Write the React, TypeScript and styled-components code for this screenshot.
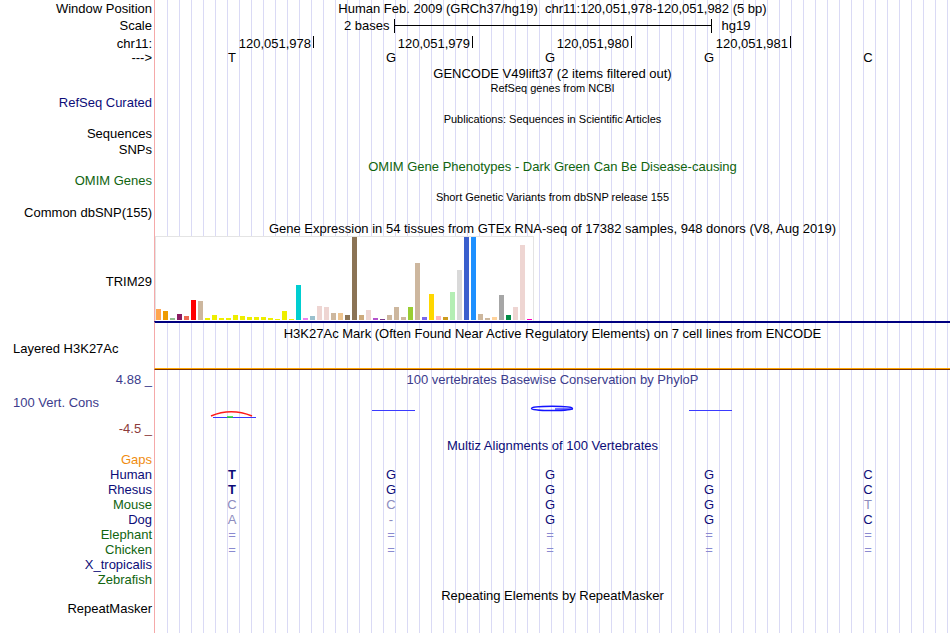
import React from "react";
import styled, { createGlobalStyle } from "styled-components";

const GRID = "#dadaf5";
const RED_LINE = "#f5a9a9";
const NAVY = "#0c0c78";
const GREEN = "#10640f";
const CONS = "#3c3c8c";
const CONS_LOW = "#8c3c3c";
const MISMATCH = "#8c8cbe";
const EQUAL = "#8a8ad0";

const GlobalStyle = createGlobalStyle`
  * { box-sizing: border-box; }
  html, body { margin: 0; padding: 0; background: #fff; }
  body {
    font-family: "Liberation Sans", Arial, Helvetica, sans-serif;
    overflow: hidden;
  }
`;

const Browser = styled.div`
  width: 950px;
  height: 633px;
  display: flex;
  flex-direction: column;
  overflow: hidden;
  background: #fff;
  color: #000;
`;

const Row = styled.div<{ $h?: number; $grow?: boolean }>`
  display: grid;
  grid-template-columns: 154px 1fr;
  height: ${(p) => (p.$h ? `${p.$h}px` : "auto")};
  flex: ${(p) => (p.$grow ? "1 0 auto" : "0 0 auto")};
  font-size: 13px;
  line-height: 15px;
`;

const Label = styled.div<{ $pt?: number; $color?: string; $left?: boolean }>`
  padding-top: ${(p) => p.$pt ?? 0}px;
  padding-right: 2px;
  padding-left: ${(p) => (p.$left ? 13 : 0)}px;
  text-align: ${(p) => (p.$left ? "left" : "right")};
  color: ${(p) => p.$color ?? "#000"};
  white-space: nowrap;
`;

// data side of a row: red divider on the left, lavender guide lines every 12px
const Track = styled.div<{ $pt?: number; $color?: string; $small?: boolean }>`
  min-width: 0;
  border-left: 1px solid ${RED_LINE};
  background:
    linear-gradient(#fff, #fff) 0 0 / 1px 100% no-repeat,
    linear-gradient(to right, ${GRID} 1px, transparent 1px) 0 0 / 12px 100% repeat-x,
    #fff;
  padding-top: ${(p) => p.$pt ?? 0}px;
  color: ${(p) => p.$color ?? "#000"};
  text-align: center;
  white-space: pre;
  font-size: ${(p) => (p.$small ? 11 : 13)}px;
  line-height: ${(p) => (p.$small ? 12 : 15)}px;
`;

// track titles may hang a pixel or two into the next row; keep them above its background
const Caption = styled.span`
  position: relative;
`;

const NavyTrack = styled(Track)`
  border-top: 2px solid #000080;
`;

const RuleTrack = styled(Track)`
  border-top: 1px solid #ffa500;
  border-bottom: 1px solid #7a3000;
`;

const ScaleLine = styled.div`
  display: grid;
  grid-template-columns: 1fr 318px 1fr;
  align-items: center;
`;

const ScaleText = styled.span<{ $side: "left" | "right" }>`
  text-align: ${(p) => (p.$side === "left" ? "right" : "left")};
  padding: ${(p) => (p.$side === "left" ? "0 4px 0 0" : "0 0 0 10px")};
`;

const ScaleBar = styled.div`
  height: 14px;
  border-left: 1px solid #000;
  border-right: 1px solid #000;
  background: linear-gradient(#000, #000) center / 100% 1px no-repeat;
`;

const Columns = styled.div`
  display: grid;
  grid-template-columns: repeat(5, 1fr);
`;

const PosCell = styled.div`
  display: flex;
  justify-content: flex-end;
  align-items: flex-start;
`;

const Tick = styled.span`
  width: 1px;
  height: 12px;
  margin-left: 2px;
  background: #000;
`;

const Base = styled.span<{ $color?: string; $bold?: boolean }>`
  text-align: center;
  padding-right: 5px;
  color: ${(p) => p.$color ?? "#000"};
  font-weight: ${(p) => (p.$bold ? 700 : 400)};
`;

const ChartBox = styled.div`
  width: 379px;
  height: 85px;
  background: #fff;
  border: 1px solid #e4e4e4;
  border-bottom-color: #fff;
  display: flex;
  align-items: flex-end;
  gap: 2px;
`;

const Bar = styled.div<{ $c: string }>`
  flex: none;
  width: 5px;
  background: ${(p) => p.$c};
`;

const LabelStack = styled.div`
  display: flex;
  flex-direction: column;
`;

const StackLine = styled(Label)<{ $mt: number }>`
  margin-top: ${(p) => p.$mt}px;
  height: 15px;
`;

const ConsPlot = styled.svg`
  display: block;
`;

const BRAIN = [2, 5, 2, 2, 5, 4, 3, 3, 3, 2, 1, 9, 1].map((h) => ["#EEEE00", h] as [string, number]);

const GTEX: [string, number][] = [
  ["#FFA54F", 11], ["#EE9A00", 9], ["#8FBC8F", 2], ["#8B1C62", 6], ["#EE6A50", 4],
  ["#FF0000", 20], ["#CDB79E", 19],
  ...BRAIN,
  ["#00CED1", 35], ["#EE82EE", 2], ["#9AC0CD", 4], ["#EED5D2", 14], ["#EED5D2", 13],
  ["#CDB79E", 7], ["#EEC591", 7], ["#8B7355", 5], ["#8B7355", 83], ["#CDAA7D", 5],
  ["#EED5D2", 10], ["#B452CD", 2], ["#7A378B", 1], ["#CDB79E", 5], ["#CDB79E", 13],
  ["#CDB79E", 3], ["#9ACD32", 13], ["#CDB79E", 57], ["#7A67EE", 3], ["#FFD700", 26],
  ["#FFB6C1", 4], ["#CD9B1D", 3], ["#B4EEB4", 28], ["#D9D9D9", 50], ["#3A5FCD", 83],
  ["#1E90FF", 83], ["#CDB79E", 6], ["#CDB79E", 2], ["#FFD39B", 3], ["#A6A6A6", 25],
  ["#008B45", 5], ["#EED5D2", 13], ["#EED5D2", 75], ["#FF00BB", 1],
];

const POSITIONS = ["120,051,978", "120,051,979", "120,051,980", "120,051,981"];
const REF = ["T", "G", "G", "G", "C"];

// kind: b = bold match, m = match, x = mismatch, e = unaligned "="
type Cell = [string, "b" | "m" | "x" | "e"];
const eq: Cell[] = Array.from({ length: 5 }, () => ["=", "e"] as Cell);

const SPECIES: { name: string; color: string; bases: Cell[] }[] = [
  { name: "Human", color: NAVY, bases: [["T", "b"], ["G", "m"], ["G", "m"], ["G", "m"], ["C", "m"]] },
  { name: "Rhesus", color: NAVY, bases: [["T", "b"], ["G", "m"], ["G", "m"], ["G", "m"], ["C", "m"]] },
  { name: "Mouse", color: GREEN, bases: [["C", "x"], ["C", "x"], ["G", "m"], ["G", "m"], ["T", "x"]] },
  { name: "Dog", color: NAVY, bases: [["A", "x"], ["-", "x"], ["G", "m"], ["G", "m"], ["C", "m"]] },
  { name: "Elephant", color: GREEN, bases: eq },
  { name: "Chicken", color: GREEN, bases: eq },
  { name: "X_tropicalis", color: NAVY, bases: [] },
  { name: "Zebrafish", color: GREEN, bases: [] },
];

const baseColor = (k: Cell[1]) => (k === "x" ? MISMATCH : k === "e" ? EQUAL : NAVY);

export default function App() {
  return (
    <>
      <GlobalStyle />
      <Browser>
        <Row $h={17}>
          <Label $pt={1}>Window Position</Label>
          <Track $pt={1}>
            <Caption>{"Human Feb. 2009 (GRCh37/hg19)  chr11:120,051,978-120,051,982 (5 bp)"}</Caption>
          </Track>
        </Row>
        <Row $h={18}>
          <Label $pt={1}>Scale</Label>
          <Track $pt={1}>
            <ScaleLine>
              <ScaleText $side="left">2 bases</ScaleText>
              <ScaleBar />
              <ScaleText $side="right">hg19</ScaleText>
            </ScaleLine>
          </Track>
        </Row>
        <Row $h={15}>
          <Label $pt={1}>chr11:</Label>
          <Track $pt={1}>
            <Columns>
              {POSITIONS.map((p) => (
                <PosCell key={p}>
                  {p}
                  <Tick />
                </PosCell>
              ))}
              <span />
            </Columns>
          </Track>
        </Row>
        <Row $h={15}>
          <Label>---&gt;</Label>
          <Track>
            <Columns>
              {REF.map((b, i) => (
                <Base key={i}>{b}</Base>
              ))}
            </Columns>
          </Track>
        </Row>
        <Row $h={16}>
          <Label />
          <Track $pt={1}>
            <Caption>GENCODE V49lift37 (2 items filtered out)</Caption>
          </Track>
        </Row>
        <Row $h={13}>
          <Label />
          <Track $pt={1} $small>
            <Caption>RefSeq genes from NCBI</Caption>
          </Track>
        </Row>
        <Row $h={18}>
          <Label $pt={1} $color={NAVY}>RefSeq Curated</Label>
          <Track />
        </Row>
        <Row $h={13}>
          <Label />
          <Track $pt={1} $small>
            <Caption>Publications: Sequences in Scientific Articles</Caption>
          </Track>
        </Row>
        <Row $h={16}>
          <Label $pt={1}>Sequences</Label>
          <Track />
        </Row>
        <Row $h={17}>
          <Label $pt={1}>SNPs</Label>
          <Track />
        </Row>
        <Row $h={14}>
          <Label />
          <Track $pt={1} $color={GREEN}>
            <Caption>OMIM Gene Phenotypes - Dark Green Can Be Disease-causing</Caption>
          </Track>
        </Row>
        <Row $h={18}>
          <Label $pt={1} $color={GREEN}>OMIM Genes</Label>
          <Track />
        </Row>
        <Row $h={14}>
          <Label />
          <Track $pt={1} $small>
            <Caption>Short Genetic Variants from dbSNP release 155</Caption>
          </Track>
        </Row>
        <Row $h={16}>
          <Label $pt={1}>Common dbSNP(155)</Label>
          <Track />
        </Row>
        <Row $h={16}>
          <Label />
          <Track $pt={1}>
            <Caption>
              Gene Expression in 54 tissues from GTEx RNA-seq of 17382 samples, 948 donors (V8, Aug 2019)
            </Caption>
          </Track>
        </Row>
        <Row $h={85}>
          <Label $pt={38}>TRIM29</Label>
          <Track>
            <ChartBox>
              {GTEX.map(([c, h], i) => (
                <Bar key={i} $c={c} style={{ height: h }} />
              ))}
            </ChartBox>
          </Track>
        </Row>
        <Row $h={19}>
          <Label />
          <NavyTrack $pt={3}>
            <Caption>H3K27Ac Mark (Often Found Near Active Regulatory Elements) on 7 cell lines from ENCODE</Caption>
          </NavyTrack>
        </Row>
        <Row $h={28}>
          <Label $pt={1} $left>Layered H3K27Ac</Label>
          <Track />
        </Row>
        <Row $h={2}>
          <Label />
          <RuleTrack />
        </Row>
        <Row $h={67}>
          <LabelStack>
            <StackLine $mt={2} $color={CONS}>4.88 _</StackLine>
            <StackLine $mt={8} $color={CONS} $left>100 Vert. Cons</StackLine>
            <StackLine $mt={11} $color={CONS_LOW}>-4.5 _</StackLine>
          </LabelStack>
          <Track $pt={2} $color={CONS}>
            <Caption>100 vertebrates Basewise Conservation by PhyloP</Caption>
            <ConsPlot width={795} height={50} viewBox="0 0 795 50">
              <path d="M56 29 Q76 20.5 97 29" stroke="#ff1a1a" strokeWidth={1.6} fill="none" />
              <line x1={58} y1={30.5} x2={101} y2={30.5} stroke="#3a3aff" strokeWidth={1} />
              <line x1={72} y1={30} x2={78} y2={30} stroke="#22dd22" strokeWidth={1.5} />
              <line x1={217} y1={23.5} x2={260} y2={23.5} stroke="#3a3aff" strokeWidth={1} />
              <ellipse cx={397} cy={21.4} rx={20.5} ry={2.1} stroke="#1414ff" strokeWidth={1.4} fill="none" />
              <line x1={400} y1={22} x2={418} y2={22} stroke="#1414ff" strokeWidth={1.2} />
              <line x1={534} y1={23.5} x2={577} y2={23.5} stroke="#3a3aff" strokeWidth={1} />
            </ConsPlot>
          </Track>
        </Row>
        <Row $h={15}>
          <Label />
          <Track $pt={1} $color={NAVY}>
            <Caption>Multiz Alignments of 100 Vertebrates</Caption>
          </Track>
        </Row>
        <Row $h={15}>
          <Label $color="#f08c10">Gaps</Label>
          <Track />
        </Row>
        {SPECIES.map((s) => (
          <Row $h={15} key={s.name}>
            <Label $color={s.color}>{s.name}</Label>
            <Track>
              <Columns>
                {s.bases.map(([b, k], i) => (
                  <Base key={i} $color={baseColor(k)} $bold={k === "b"}>
                    {b}
                  </Base>
                ))}
              </Columns>
            </Track>
          </Row>
        ))}
        <Row $h={14}>
          <Label />
          <Track $pt={1}>
            <Caption>Repeating Elements by RepeatMasker</Caption>
          </Track>
        </Row>
        <Row $grow>
          <Label>RepeatMasker</Label>
          <Track />
        </Row>
      </Browser>
    </>
  );
}
